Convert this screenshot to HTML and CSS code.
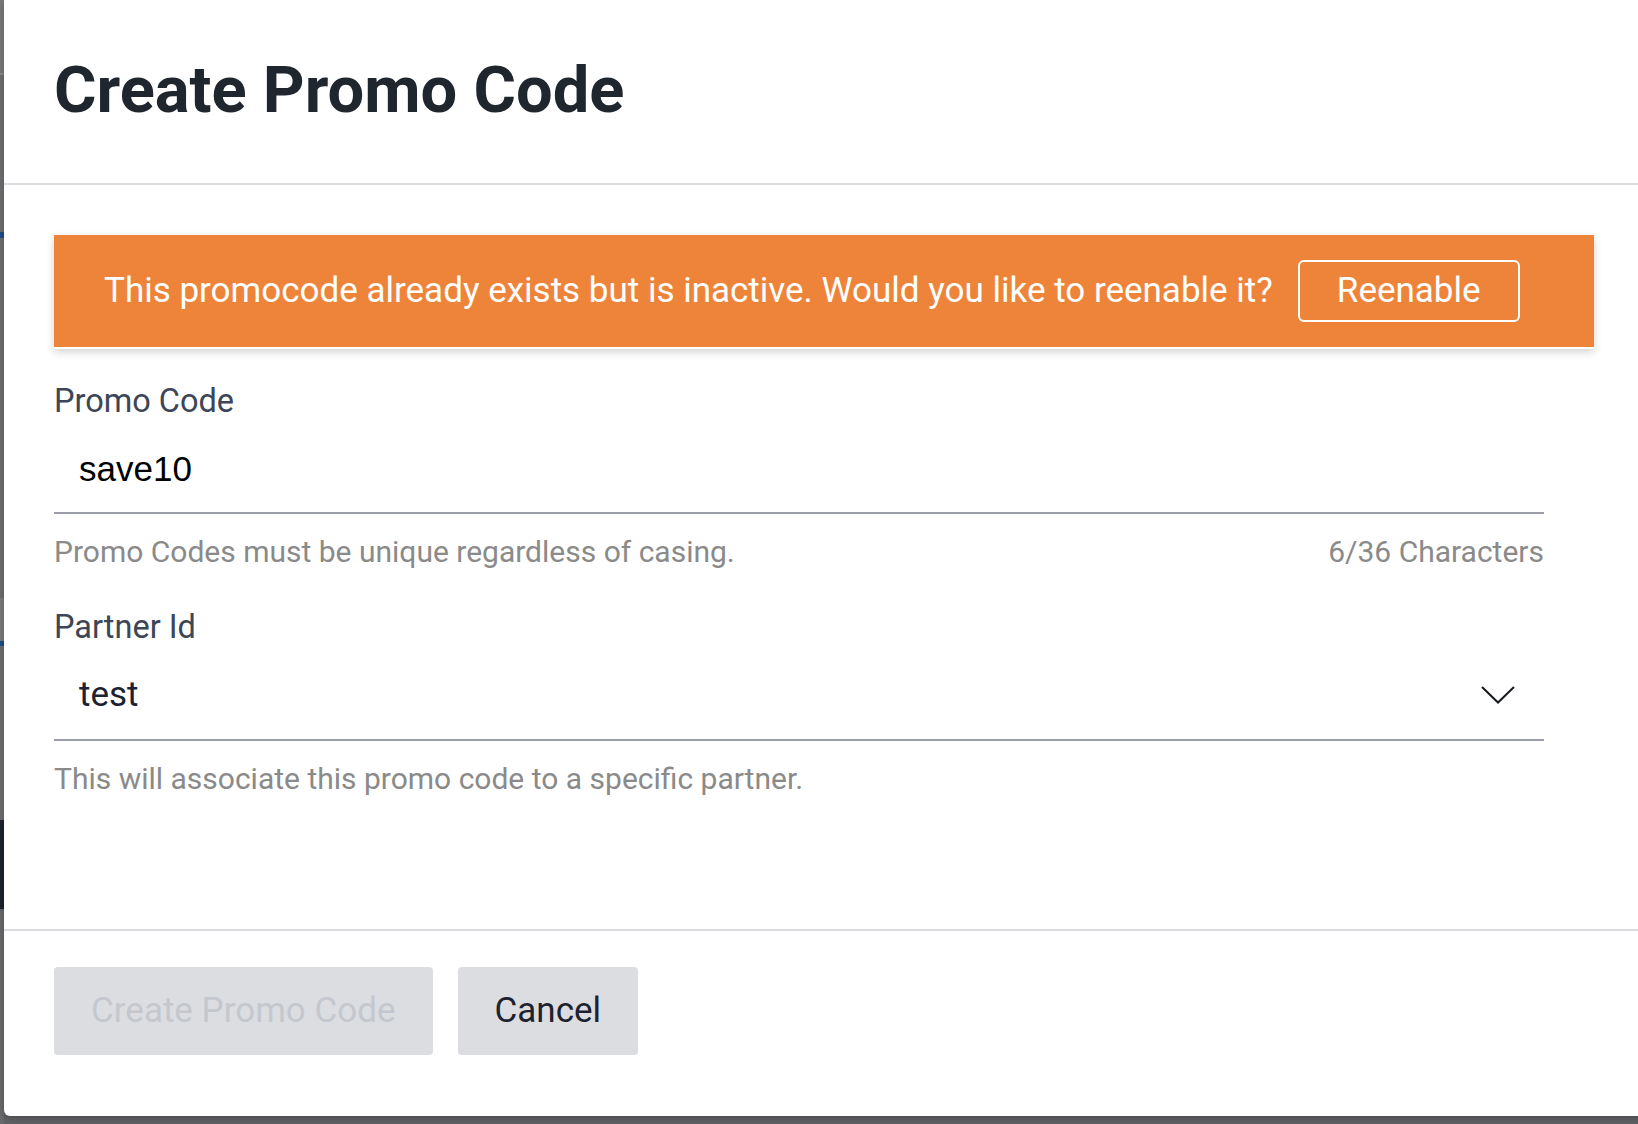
FILE: index.html
```html
<!DOCTYPE html>
<html lang="en">
<head>
<meta charset="utf-8">
<title>Create Promo Code</title>
<link rel="stylesheet" href="styles.css">
</head>
<body>
<div class="modal">
  <header class="modal-header">
    <h1 class="modal-title">Create Promo Code</h1>
  </header>
  <section class="modal-body">
    <div class="alert">
      <span class="alert-text">This promocode already exists but is inactive. Would you like to reenable it?</span>
      <button class="alert-btn" type="button">Reenable</button>
    </div>
    <div class="field">
      <div class="field-label">Promo Code</div>
      <div class="field-control">
        <span class="input-value">save10</span>
      </div>
      <div class="field-help">
        <span>Promo Codes must be unique regardless of casing.</span>
        <span>6/36 Characters</span>
      </div>
    </div>
    <div class="field field-second">
      <div class="field-label">Partner Id</div>
      <div class="field-control select">
        <span class="select-value">test</span>
        <svg class="chevron" width="34" height="18" viewBox="0 0 34 18" aria-hidden="true">
          <path d="M1 1 L17 16.5 L33 1" fill="none" stroke="#161a20" stroke-width="2"/>
        </svg>
      </div>
      <div class="field-help">
        <span>This will associate this promo code to a specific partner.</span>
      </div>
    </div>
  </section>
  <footer class="modal-footer">
    <button class="btn btn-disabled" type="button" disabled>Create Promo Code</button>
    <button class="btn" type="button">Cancel</button>
  </footer>
</div>
</body>
</html>
```

FILE: styles.css
```css
html, body {
  margin: 0;
  padding: 0;
  height: 100%;
}

body {
  overflow: hidden;
  font-family: Roboto, "Noto Sans", "Liberation Sans", sans-serif;
  background-color: #616265;
  background-image: linear-gradient(to bottom,
    #7a7a7d 0 73px,
    #8a8a8d 73px 75px,
    #6f6f72 75px 232px,
    #1f4c8c 232px 238px,
    #6f6f72 238px 598px,
    #7b7b7e 598px 641px,
    #1f4c8c 641px 646px,
    #6e6e71 646px 820px,
    #1e232d 820px 909px,
    #6a6a6d 909px 100%);
  background-repeat: no-repeat;
  background-size: 4px 100%;
  padding-left: 4px;
}

.modal {
  width: 1640px;
  background: #ffffff;
  border-bottom-left-radius: 6px;
  box-shadow: 0 2px 8px rgba(0, 0, 0, 0.25);
}

.modal-header {
  padding: 50px 50px 53px;
  border-bottom: 2px solid #dcdce0;
}

.modal-title {
  margin: 0;
  font-size: 65px;
  line-height: 80px;
  font-weight: 700;
  color: #20262e;
}

.modal-body {
  padding: 50px 50px 132px;
}

.alert {
  display: flex;
  align-items: center;
  gap: 25px;
  height: 112px;
  padding: 0 50px;
  background: #ee8439;
  border-bottom: 2px solid #ffffff;
  box-shadow: 0 3px 8px rgba(0, 0, 0, 0.18);
}

.alert-text {
  font-size: 35px;
  line-height: 40px;
  color: #ffffff;
}

.alert-btn {
  font-family: inherit;
  font-size: 35px;
  line-height: 40px;
  color: #ffffff;
  background: transparent;
  border: 2px solid #ffffff;
  border-radius: 6px;
  padding: 9px 37px;
  cursor: pointer;
}

.field {
  margin: 32px 50px 0 0;
}

.field-second {
  margin-top: 37px;
}

.field-label {
  font-size: 32.5px;
  line-height: 40px;
  color: #3c4657;
}

.field-control {
  display: flex;
  align-items: center;
  padding: 28px 29px 23px 25px;
  border-bottom: 2px solid #9b9ea7;
}

.select {
  justify-content: space-between;
  padding-bottom: 24px;
}

.input-value {
  font-family: "Liberation Sans", Arial, sans-serif;
  font-size: 35px;
  line-height: 40px;
  color: #000000;
}

.select-value {
  font-size: 35px;
  line-height: 40px;
  color: #1c2230;
}

.chevron {
  display: block;
}

.field-help {
  display: flex;
  justify-content: space-between;
  margin-top: 20px;
  font-size: 30px;
  line-height: 36px;
  color: #8a8a8a;
}

.modal-footer {
  display: flex;
  gap: 25px;
  padding: 36px 50px 61px;
  border-top: 2px solid #dcdce0;
}

.btn {
  height: 88px;
  padding: 0 37px;
  font-family: inherit;
  font-size: 35px;
  line-height: 40px;
  color: #1c2230;
  background: #dcdde1;
  border: none;
  border-radius: 4px;
  cursor: pointer;
}

.btn-disabled {
  color: #c4c8ce;
  cursor: default;
}
```
